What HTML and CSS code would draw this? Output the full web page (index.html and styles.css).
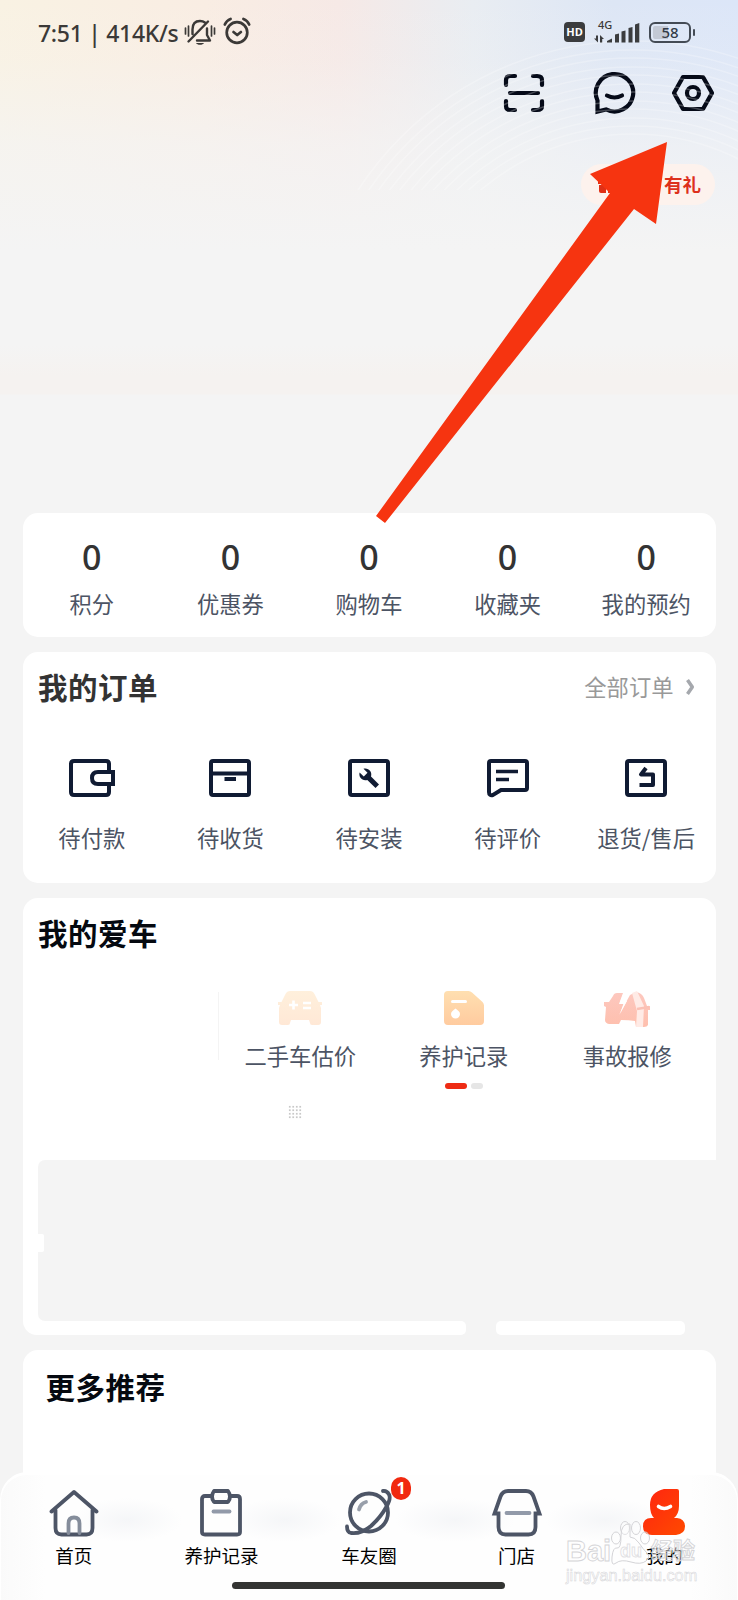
FILE: index.html
```html
<!DOCTYPE html>
<html lang="zh-CN">
<head>
<meta charset="utf-8">
<title>我的</title>
<link rel="stylesheet" href="styles.css">
</head>
<body>
<div class="screen">
  <header class="hero">
    <svg class="rings" width="738" height="190" viewBox="0 0 738 190" fill="none" stroke="#fff" stroke-width="1.6">
      <circle cx="633" cy="369" r="328"/><circle cx="633" cy="369" r="319"/><circle cx="633" cy="369" r="311"/><circle cx="633" cy="369" r="302"/><circle cx="633" cy="369" r="294"/><circle cx="633" cy="369" r="285"/><circle cx="633" cy="369" r="277"/><circle cx="633" cy="369" r="268"/><circle cx="633" cy="369" r="260"/><circle cx="633" cy="369" r="251"/><circle cx="633" cy="369" r="243"/><circle cx="633" cy="369" r="235"/>
    </svg>
    <div class="status">
      <span class="clock">7:51 | 414K/s</span>
      <svg class="bell" width="32" height="28" viewBox="0 0 32 28" fill="none" stroke="#3b3937" stroke-width="2.4" stroke-linecap="round" stroke-linejoin="round">
        <path d="M8.500 16V11.500C8.500 6 11 3 16 3c2 0 3.600.5 4.900 1.500M23 10.500V17l3 5.500H13M4.500 23.500 24 3.500"/>
        <path d="M1.500 10v6M4.500 8v10M27.500 8v10M30.500 10v6" stroke-width="1.700"/>
        <path d="M12 25h8c-1 2.400-7 2.400-8 0Z" fill="#3b3937" stroke="none"/>
      </svg>
      <svg class="alarm" width="28" height="28" viewBox="0 0 28 28" fill="none" stroke="#3b3937" stroke-width="2.700" stroke-linecap="round" stroke-linejoin="round">
        <circle cx="14" cy="15.500" r="10.300"/><path d="M1.800 7.500C3 4.700 4.800 3 7.600 2M26.200 7.500C25 4.700 23.200 3 20.400 2M10.500 15l3.700 3 3.700-3"/>
      </svg>
      <span class="hd">HD</span>
      <span class="net">4G</span>
      <svg class="signal" width="48" height="22" viewBox="0 0 48 22" fill="#3b3c3e">
        <path d="M4 14.500v7L0 17.500h2V14.500ZM6 21.500V14l4 4H8.200v3.500ZM13 20l5-2.500v4h-5ZM21 13.500l4-1v9H21ZM27.500 10.500l4-1v12h-4ZM34.500 7l4-1v15.500h-4ZM41 3.500l4.300-1.500v19.500H41Z"/>
      </svg>
      <span class="battery">58</span>
    </div>
    <div class="actions">
      <svg width="42" height="42" viewBox="0 0 42 42" fill="none" stroke="#050a18" stroke-width="4.200" stroke-linecap="round" stroke-linejoin="round">
        <path d="M3 13V8q0-4 4-4h5M30 4h4q5 0 5 4v5M39 29v5q0 4-5 4h-4M12 38H7q-4 0-4-4v-5M7 21h28"/>
      </svg>
      <svg width="44" height="44" viewBox="0 0 44 44" fill="none" stroke="#050a18" stroke-width="4.200" stroke-linecap="round">
        <path d="M5.500 40.500V29.500A18.700 18.700 0 1 1 14 38.400Z" stroke-linejoin="miter" stroke-linecap="butt"/><path d="M15 24.500q7.500 4 15 0"/>
      </svg>
      <svg width="44" height="40" viewBox="0 0 44 40" fill="none" stroke="#050a18" stroke-width="4.200" stroke-linejoin="round">
        <path d="M12 4h20l9 16-9 16H12L3 20Z"/><circle cx="22" cy="20" r="6"/>
      </svg>
    </div>
    <div class="gift">
      <svg width="18" height="18" viewBox="0 0 18 18" fill="#df3016"><path d="M0 4h18v4H0ZM1 9h7v8H3q-2 0-2-2ZM10 9h7v6q0 2-2 2h-5Z"/></svg>
      <span>有礼</span>
    </div>
  </header>

  <main class="content">
    <section class="card stats">
      <div class="stat"><b>0</b><span>积分</span></div>
      <div class="stat"><b>0</b><span>优惠券</span></div>
      <div class="stat"><b>0</b><span>购物车</span></div>
      <div class="stat"><b>0</b><span>收藏夹</span></div>
      <div class="stat"><b>0</b><span>我的预约</span></div>
    </section>

    <section class="card orders">
      <div class="head">
        <h2 class="soft">我的订单</h2>
        <span class="all">全部订单</span>
        <svg width="9" height="16" viewBox="0 0 9 16" fill="none" stroke="#a5a8ad" stroke-width="3.500" stroke-linejoin="round"><path d="M1.500 1l4.800 7-4.800 7"/></svg>
      </div>
      <div class="order-list">
        <div class="order">
          <svg width="46" height="40" viewBox="0 0 46 40" fill="none" stroke="#101b33" stroke-width="4"><path d="M40 12.500V6q0-3-3-3H5Q2 3 2 6v28q0 3 3 3h32q3 0 3-3v-6.500" stroke-linejoin="round"/><path d="M44 14H29q-6 0-6 6t6 6h15Z"/></svg>
          <span>待付款</span></div>
        <div class="order">
          <svg width="42" height="40" viewBox="0 0 42 40" fill="none" stroke="#101b33" stroke-width="4"><rect x="2" y="3" width="38" height="34" rx="2"/><path d="M2 15.500h38M15.500 21h11.500"/></svg>
          <span>待收货</span></div>
        <div class="order">
          <svg width="42" height="40" viewBox="0 0 42 40"><rect x="2" y="3" width="38" height="34" rx="2" fill="none" stroke="#101b33" stroke-width="4"/><path d="M15.500 10.800c5-1.200 9 3 7.500 7.700L31 26.500 27.500 30l-8.200-8c-5 1.500-9-3-7.700-7.500l4.200 4 3.700-3.800Z" fill="#101b33"/></svg>
          <span>待安装</span></div>
        <div class="order">
          <svg width="42" height="40" viewBox="0 0 42 40" fill="none" stroke="#101b33" stroke-width="4"><path d="M4 3h34q2 0 2 2v25q0 2-2 2H14l-8 5q-4 1-4-3V5q0-2 2-2Z"/><path d="M9 13.500h22M9 21.500h13" stroke-width="3.600"/></svg>
          <span>待评价</span></div>
        <div class="order">
          <svg width="42" height="40" viewBox="0 0 42 40" fill="none" stroke="#101b33" stroke-width="4"><rect x="2" y="3" width="38" height="34" rx="2"/><path d="M21 10l-5 6.500h12V27H14.500" stroke-linejoin="round"/></svg>
          <span>退货/售后</span></div>
      </div>
    </section>

    <section class="garage">
      <div class="garage-top">
        <h2>我的爱车</h2>
        <div class="services">
          <div class="service">
            <svg width="46" height="40" viewBox="0 0 46 40"><defs><linearGradient id="g1" x2="0" y2="1"><stop stop-color="#fff0dc"/><stop offset="1" stop-color="#ffe8d6"/></linearGradient></defs><path d="M13 2h20q3 0 4.500 3l4 8h3.500v3h-2l1 3v14q0 3-3 3h-6q-2 0-2-2l-1-3H14l-1 3q0 2-2 2H5q-3 0-3-3V19l1-3H1v-3h3.500l4-8Q10 2 13 2Z" fill="url(#g1)"/><path d="M12 16h9M16.500 11.500v9M26 14h8M26 19h8" stroke="#fff" stroke-width="2.600"/></svg>
            <span>二手车估价</span></div>
          <div class="service">
            <svg width="42" height="40" viewBox="0 0 42 40"><defs><linearGradient id="g2" x2="0" y2="1"><stop stop-color="#ffdfb0"/><stop offset="1" stop-color="#ffcb9f"/></linearGradient></defs><path d="M5 2h20.500q2 0 3.500 1.500L39.500 13q1.500 1.500 1.500 3.500V32q0 4-4 4H5q-4 0-4-4V6q0-4 4-4Z" fill="url(#g2)"/><path d="M9.500 12.500h13" stroke="#fff" stroke-width="3" stroke-linecap="round"/><path d="M12.500 19.500c2 1.500 4.500 3 4.500 5.500a4.500 4.500 0 0 1-9 0c0-2.500 2.500-4 4.500-5.500Z" fill="#fff"/></svg>
            <span>养护记录</span></div>
          <div class="service">
            <svg width="46" height="40" viewBox="0 0 46 40"><defs><linearGradient id="g3" x2="0" y2="1"><stop stop-color="#fdc8bf"/><stop offset="1" stop-color="#febfad"/></linearGradient></defs><path d="M13 4h6l-4 11h5l-5 11L26 6l6-3q6 1 8 6l3 8h3v4h-2v15q-1 2-4 2h-8l-1-6q-6-1-14-1l-2 4H5q-4-1-4-4l1-13-2-1v-4h5l4-6q1-3 4-3Z" fill="url(#g3)"/><path d="M20 3l-4 10h4l-4 12 7-13h-4l3-9Z" fill="#fff"/><path d="M28 4l5-2 7 15-1 21h-7l1-16Z" fill="#ffebe6"/><path d="M33 20l12-2" stroke="#fbc1b5" stroke-width="2.500"/></svg>
            <span>事故报修</span></div>
        </div>
        <div class="pager"><i class="on"></i><i></i></div>
        <i class="rule"></i>
        <i class="dots"></i>
      </div>
      <div class="promo"><i class="notch"></i></div>
      <div class="garage-end"><i></i><i></i></div>
    </section>

    <section class="card more"><h2>更多推荐</h2></section>
  </main>

  <nav class="tabs">
    <div class="tab">
      <svg width="50" height="48" viewBox="0 0 50 48" fill="none" stroke="#4d5566" stroke-width="3.800" stroke-linecap="round" stroke-linejoin="round"><path d="M2.500 22.500 25 3l22.500 19.500M6.500 21v18q0 6.500 6 6.500h25q6 0 6-6.500V21"/><path d="M19.500 44V34.500q0-6 5.500-6t5.500 6V44" stroke="#858d9b"/></svg>
      <span>首页</span></div>
    <div class="tab">
      <svg width="42" height="48" viewBox="0 0 42 48" fill="none" stroke="#4d5566" stroke-width="3.800" stroke-linejoin="round"><path d="M11 7H5Q2 7 2 10v33q0 2.500 3 2.500h32q3 0 3-2.500V10q0-3-3-3h-6M14 2h14q4 5.500 0 11H14q-4-5.500 0-11Z"/><path d="M13.500 22.500h16" stroke="#929aa9" stroke-linecap="round"/></svg>
      <span>养护记录</span></div>
    <div class="tab">
      <svg width="50" height="48" viewBox="0 0 50 48" fill="none" stroke="#4d5566" stroke-width="3.800" stroke-linecap="round"><circle cx="25" cy="23.500" r="19"/><path d="M3 37.500c0 4 1 6 4 6.500 8 1 14-2 20-7 6-5.500 12-13 15-18.500 3-5 5-9.500 3-13q-2-4-6-3.500"/><path d="M15 20.500q1.500-6 7-7.500" stroke="#989faa"/></svg>
      <em>1</em>
      <span>车友圈</span></div>
    <div class="tab">
      <svg width="52" height="48" viewBox="0 0 52 48" fill="none" stroke="#4d5566" stroke-width="3.800"><path d="M7.500 24.500H3.500L9.500 7.500Q11.500 2 17 2h18q5.500 0 7.500 5.500l6 17h-4V38q0 7.500-7 7.500h-23q-7 0-7-7.500Z"/><path d="M15.500 24h23" stroke="#929aa9" stroke-linecap="round"/></svg>
      <span>门店</span></div>
    <div class="tab">
      <svg width="44" height="48" viewBox="0 0 44 48"><defs><linearGradient id="g4" x1="0" y1="0" x2="1" y2="1"><stop stop-color="#ff2410"/><stop offset="1" stop-color="#ff4a00"/></linearGradient></defs><path d="M22 0h13q2 0 2 2v15q0 8-5 12h3q8 1 8 8.500T34 46H10q-9 0-9-8.500T9 29h3Q8 25 8 16 8 3 22 0Z" fill="url(#g4)"/><path d="M16.500 17.500q5.500 4 12 0" fill="none" stroke="#fff" stroke-width="3.600" stroke-linecap="round"/></svg>
      <span>我的</span></div>
    <i class="home-bar"></i>
  </nav>

  <div class="mark">
    <div class="mark-name"><span class="bai">Bai</span><span class="du">du</span><span>经验</span></div>
    <div class="mark-url">jingyan.baidu.com</div>
    <svg class="paw" width="42" height="46" viewBox="0 0 42 46" fill="#fff" fill-opacity=".3" stroke="#d4d4d7" stroke-width="1"><ellipse cx="6" cy="18" rx="4.500" ry="6"/><ellipse cx="15" cy="8" rx="4.500" ry="6.500"/><ellipse cx="26" cy="8" rx="4.500" ry="6.500"/><ellipse cx="35" cy="18" rx="4.500" ry="6"/><path d="M20 17q5 0 9 6t8 10-1 8-15 1-15 1-4-6 5-9 4-12 9-12Z"/></svg>
  </div>

  <svg class="arrow" width="295" height="385" viewBox="0 0 295 385"><path d="M292 2 215 34 235 53 1 376l9 7L259 69l22 15Z" fill="#f63410"/></svg>
</div>
</body>
</html>
```

FILE: styles.css
```css
* { box-sizing: border-box; }
body {
  margin: 0;
  background: #f4f4f4;
  font-family: "Noto Sans CJK SC", sans-serif;
}
h2 { margin: 0; font-size: 29.5px; line-height: 38px; font-weight: 700; letter-spacing: .5px; color: #050910; }
h2.soft { color: #333; }
svg { display: block; flex: none; }
i, em { font-style: normal; display: block; }

.screen { position: relative; width: 738px; height: 1600px; overflow: hidden; }

.hero {
  position: relative;
  height: 513px;
  background:
    linear-gradient(180deg, transparent 345px, #f5f2f0 375px, #f5f2f0 394px, transparent 395px),
    linear-gradient(180deg, rgba(244,244,244,0) 0, rgba(244,244,244,.15) 60px, rgba(244,244,244,.7) 145px, #f4f4f4 250px),
    linear-gradient(90deg, #f9f2e3 0, #f9ede3 28%, #f6e9e6 46%, #e9edf2 64%, #dde6f5 83%, #dce6f8 100%);
}
.rings { position: absolute; left: 0; top: 0; opacity: .25; }

.status { display: flex; position: relative; height: 64px; padding-left: 38px; color: #3b3937; }
.clock { width: 146px; padding-top: 16px; font: 500 23px/34px "Noto Sans", sans-serif; white-space: nowrap; letter-spacing: -.3px; }
.bell { margin-top: 18px; }
.alarm { margin: 17px 0 0 7px; }
.hd { width: 21px; height: 20px; margin: 22px 0 0 313px; border-radius: 4px; background: #3b3c3e; color: #fff; font: 700 11px/20px "Open Sans", sans-serif; text-align: center; }
.net { width: 14px; margin: 17px 0 0 13px; font: 500 11px/16px "Noto Sans", sans-serif; }
.signal { margin: 21px 0 0 -18px; }
.battery {
  position: relative; width: 42px; height: 21px; margin: 22px 0 0 7px;
  border: 2px solid #444b55; border-radius: 6px;
  background: linear-gradient(90deg, #c3c9d5 0 45%, transparent 45%) content-box;
  padding: 2px;
  font: 500 15px/13px "Noto Sans", sans-serif; text-align: center; color: #333b48;
}
.battery::after { content: ""; position: absolute; right: -6px; top: 5px; width: 2.5px; height: 7px; background: #444b55; border-radius: 1px; }

.actions { display: flex; justify-content: flex-end; align-items: center; height: 58px; padding-right: 23px; }
.actions svg:nth-child(2) { margin: 0 35px 0 47px; }
.gift { display: flex; align-items: center; width: 134px; height: 41px; margin: 42px 0 0 581px; padding: 0 14px 0 17px; justify-content: space-between; border-radius: 21px; background: #fdf2ed; color: #dd301c; font-size: 18.5px; font-weight: 700; line-height: 38px; }
.gift span { margin-top: -2px; }

.content { padding: 0 22.5px; display: flex; flex-direction: column; gap: 15px; }
.card { background: #fff; border-radius: 15px; flex: none; }

.stats { display: grid; grid-template-columns: repeat(5, 1fr); height: 124px; padding-top: 21px; }
.stat { display: flex; flex-direction: column; align-items: center; }
.stat b { font: 500 34px/46px "Noto Sans", sans-serif; color: #333; }
.stat span, .order span, .service span { font-size: 22.3px; line-height: 32px; color: #4c5464; white-space: nowrap; }
.stat span { margin-top: 7px; }

.orders { height: 231px; padding-top: 15px; }
.head { display: flex; align-items: center; height: 40px; padding: 0 20.5px 0 15.5px; }
.head h2 { margin-top: -2px; }
.all { margin: -2px 12.5px 0 auto; font-size: 22.3px; line-height: 32px; color: #999; }
.order-list { display: grid; grid-template-columns: repeat(5, 1fr); margin-top: 51px; }
.order { display: flex; flex-direction: column; align-items: center; gap: 22.5px; }

.garage-top { position: relative; height: 262px; padding: 15px 0 0 15.5px; background: #fff; border-radius: 15px 15px 0 0; }
.services { display: grid; grid-template-columns: repeat(3, 163.5px); margin: 38px 0 0 180.5px; }
.service { display: flex; flex-direction: column; align-items: center; gap: 9.5px; }
.pager { display: flex; gap: 4px; margin: 12.5px 0 0 407px; }
.pager i { width: 12px; height: 6px; border-radius: 3px; background: #e6e6e6; }
.pager .on { width: 22px; background: #ee2b14; }
.rule { position: absolute; left: 195.5px; top: 94px; width: 1px; height: 68px; background: #f4f4f4; }
.dots { position: absolute; left: 265px; top: 207px; width: 14px; height: 14px; background: radial-gradient(circle, #c8c8c8 .7px, transparent 1px) 0 0 / 3.5px 3.5px; }
.promo { position: relative; height: 161px; padding-top: 74px; background: linear-gradient(90deg, #fff 22px, transparent 22px); }
.promo::before { content: ""; position: absolute; left: 15px; top: 0; width: 30px; height: 161px; border-radius: 7px 0 0 7px; background: #f4f4f4; }
.notch { position: relative; width: 21px; height: 18px; background: #fff; border-radius: 2px; }
.garage-end { display: flex; gap: 30px; height: 14px; }
.garage-end i { width: 443.5px; background: #fff; border-radius: 0 5px 5px 14px; }
.garage-end i + i { width: 189px; border-radius: 5px; }

.more { height: 250px; padding: 17px 23px; }

.tabs {
  position: absolute; left: 0; right: 0; bottom: 0; height: 128px;
  display: grid; grid-template-columns: repeat(5, 1fr); padding-top: 17px;
  border-radius: 27px 27px 0 0; box-shadow: inset 0 2px 0 1px #fff;
  background:
    radial-gradient(55px 22px at 127px 48px, #f5f6f8, transparent),
    radial-gradient(55px 22px at 285px 48px, #f5f6f8, transparent),
    radial-gradient(60px 22px at 455px 48px, #f5f6f8, transparent),
    radial-gradient(60px 22px at 605px 48px, #f5f6f8, transparent),
    linear-gradient(90deg, #fafafa, #fefefe 45px, #fefefe 690px, #fafafa);
}
.tab { position: relative; display: flex; flex-direction: column; align-items: center; gap: 6px; }
.tab span { font-size: 18.5px; line-height: 24px; color: #000; }
.tab em { position: absolute; left: 96px; top: -12px; width: 20px; height: 23px; border-radius: 10px; background: #f1290f; color: #fff; font: 700 16px/23px "Noto Sans", sans-serif; text-align: center; }
.home-bar { position: absolute; left: 232px; bottom: 11.5px; width: 273px; height: 7px; border-radius: 4px; background: #333432; }

.mark { position: absolute; left: 566px; top: 1520px; width: 136px; white-space: nowrap; color: rgba(255,255,255,.4); -webkit-text-stroke: .9px #d4d4d7; font-family: "Liberation Sans", "Noto Sans CJK SC", sans-serif; }
.mark-name { display: grid; grid-template-columns: 54px 31px 50px; align-items: center; height: 46px; padding-top: 15px; font-size: 22px; line-height: 30px; font-weight: 700; }
.bai { font-size: 29px; }
.du { font-size: 18px; }
.mark-url { font-size: 16.3px; line-height: 18px; -webkit-text-stroke-width: .5px; }
.paw { position: absolute; left: 44px; top: 0; }

.arrow { position: absolute; left: 375px; top: 140px; }
```
